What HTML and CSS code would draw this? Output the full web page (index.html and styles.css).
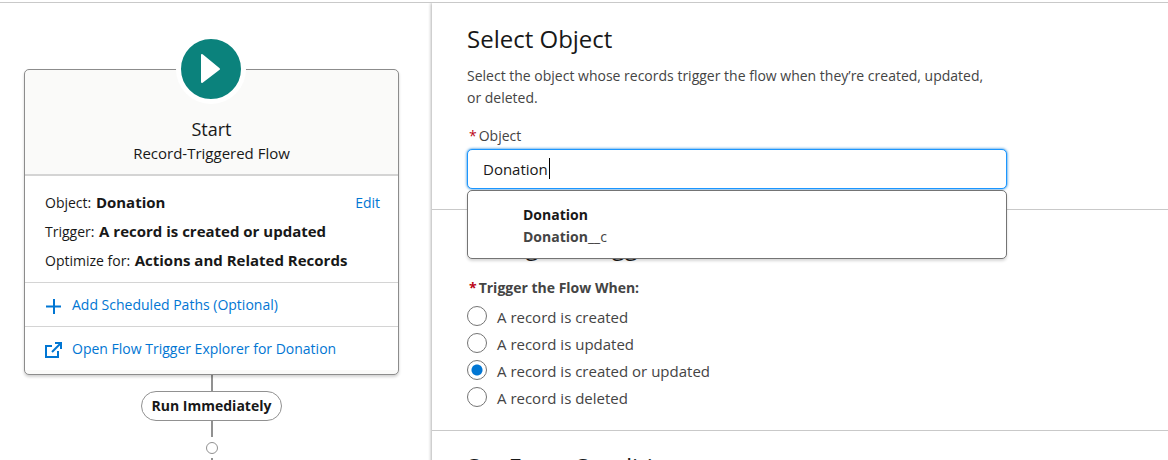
FILE: index.html
```html
<!DOCTYPE html>
<html lang="en">
<head>
    <meta charset="UTF-8">
    <meta name="viewport" content="width=device-width, initial-scale=1.0">
    <title>Flow Builder - Configure Start</title>
    <link rel="stylesheet" href="styles.css">
</head>
<body>
    <div class="builder">

        <main class="canvas">
            <div class="start-card">
                <div class="start-icon">
                    <svg width="60" height="60" viewBox="0 0 60 60" aria-hidden="true">
                        <path d="M21 16 L21 43 L38 30 Z" fill="#fff" stroke="#fff" stroke-width="2" stroke-linejoin="round"/>
                    </svg>
                </div>
                <div class="start-header">
                    <h2>Start</h2>
                    <p>Record-Triggered Flow</p>
                </div>
                <div class="start-details">
                    <a href="#" class="edit-link">Edit</a>
                    <p>Object: <strong>Donation</strong></p>
                    <p>Trigger: <strong>A record is created or updated</strong></p>
                    <p>Optimize for: <strong>Actions and Related Records</strong></p>
                </div>
                <a href="#" class="start-action">
                    <svg width="18" height="18" viewBox="0 0 18 18" aria-hidden="true">
                        <path d="M9 2 V17 M1 9.5 H16" fill="none" stroke="#0176d3" stroke-width="2"/>
                    </svg>
                    <span>Add Scheduled Paths (Optional)</span>
                </a>
                <a href="#" class="start-action">
                    <svg width="18" height="18" viewBox="0 0 18 18" aria-hidden="true">
                        <path d="M7 5 H1 V16 H13 V10" fill="none" stroke="#0176d3" stroke-width="2"/>
                        <path d="M7 11 L15 3" fill="none" stroke="#0176d3" stroke-width="2"/>
                        <path d="M10 2 H16 V8" fill="none" stroke="#0176d3" stroke-width="2"/>
                    </svg>
                    <span>Open Flow Trigger Explorer for Donation</span>
                </a>
            </div>
            <div class="connector"></div>
            <div class="path-label">Run Immediately</div>
            <div class="connector"></div>
            <button class="add-node" aria-label="Add element"></button>
            <div class="connector"></div>
        </main>

        <aside class="panel">
            <section class="panel-section">
                <h1>Select Object</h1>
                <p class="description">Select the object whose records trigger the flow when they’re created, updated, or deleted.</p>
                <label for="object" class="field-label"><span class="required">*</span>Object</label>
                <div class="combobox">
                    <input type="text" id="object" value="Donation" autocomplete="off">
                    <span class="caret"></span>
                    <ul class="dropdown">
                        <li>
                            <div class="option-name">Donation</div>
                            <div class="option-api"><b>Donation</b>__c</div>
                        </li>
                    </ul>
                </div>
            </section>

            <section class="panel-section">
                <h1>Configure Trigger</h1>
                <fieldset>
                    <legend><span class="required">*</span>Trigger the Flow When:</legend>
                    <label class="radio"><input type="radio" name="trigger"><span>A record is created</span></label>
                    <label class="radio"><input type="radio" name="trigger"><span>A record is updated</span></label>
                    <label class="radio"><input type="radio" name="trigger" checked><span>A record is created or updated</span></label>
                    <label class="radio"><input type="radio" name="trigger"><span>A record is deleted</span></label>
                </fieldset>
            </section>

            <section class="panel-section">
                <h1>Set Entry Conditions</h1>
            </section>
        </aside>

    </div>
</body>
</html>
```
FILE: styles.css
```css
* {
    box-sizing: border-box;
}
body {
    margin: 0;
    padding-top: 2px;
    height: 100vh;
    overflow: hidden;
    font-family: 'Open Sans', 'Noto Sans', sans-serif;
    font-size: 14px;
    line-height: 20px;
    color: #181818;
    background: #fff;
}
h1, h2, p, ul {
    margin: 0;
    padding: 0;
    font-weight: normal;
}
a {
    color: #0176d3;
    text-decoration: none;
}
.builder {
    display: grid;
    grid-template-columns: 432px 1fr;
    height: 100%;
    border-top: 1px solid #c9c9c9;
}

/* Canvas */
.canvas {
    display: flex;
    flex-direction: column;
    align-items: center;
    padding: 66px 33px 0 24px;
}
.start-card {
    position: relative;
    width: 100%;
    flex-shrink: 0;
    padding-bottom: 4px;
    border: 1px solid #8c8c8c;
    border-radius: 5px;
    background: #fafaf9;
    box-shadow: 0 2px 3px rgba(0, 0, 0, 0.18);
}
.start-icon {
    position: absolute;
    top: -36px;
    left: 50%;
    width: 70px;
    height: 70px;
    margin-left: -36px;
    border: 5px solid #fff;
    border-radius: 50%;
    background: #0b827c;
}
.start-icon svg {
    display: block;
}
.start-header {
    padding: 45px 20px 11px;
    border-bottom: 2px solid #d4d4d4;
    text-align: center;
}
.start-header h2 {
    font-size: 18px;
    line-height: 28px;
}
.start-header p {
    font-size: 15px;
}
.start-details {
    position: relative;
    padding: 12px 20px 7px;
    background: #fff;
}
.start-details p {
    line-height: 29px;
}
.start-details strong {
    margin-left: 1px;
    font-size: 15px;
}
.edit-link {
    float: right;
    line-height: 29px;
    margin-right: -2px;
}
.start-action {
    display: flex;
    align-items: center;
    gap: 9px;
    height: 44px;
    padding: 0 20px;
    border-top: 1px solid #d4d4d4;
    background: #fff;
}
.start-action svg {
    margin-top: 2px;
}
.connector {
    flex-shrink: 0;
    width: 2px;
    height: 16px;
    background: #919191;
}
.path-label {
    flex-shrink: 0;
    padding: 4px 10px;
    border: 1px solid #919191;
    border-radius: 15px;
    font-weight: bold;
}
.add-node {
    flex-shrink: 0;
    width: 12px;
    height: 12px;
    margin: 5px 0 4px;
    padding: 0;
    border: 1px solid #919191;
    border-radius: 50%;
    background: #fff;
}

/* Side panel */
.panel {
    box-shadow: -1px 0 3px rgba(0, 0, 0, 0.3);
    background: #fff;
    color: #444;
    overflow: hidden;
    clip-path: inset(0 0 0 -6px);
}
.panel-section {
    padding: 20px 35px;
    border-bottom: 1px solid #c9c9c9;
}
.panel-section h1 {
    font-size: 24px;
    line-height: 32px;
    color: #181818;
}
.description {
    max-width: 530px;
    margin: 10px 0 17px;
    line-height: 22px;
}
.field-label {
    display: block;
    margin-bottom: 3px;
    padding-left: 2px;
}
.required {
    margin-right: 2px;
    color: #ba0517;
}
.combobox {
    position: relative;
    max-width: 540px;
}
.combobox input {
    display: block;
    width: 100%;
    height: 40px;
    padding: 0 15px;
    border: 1px solid #1b96ff;
    border-radius: 5px;
    outline: none;
    box-shadow: 0 0 3px #0176d3;
    background: #fff;
    color: #181818;
    font: inherit;
    font-size: 15px;
}
.caret {
    position: absolute;
    top: 9px;
    left: 82px;
    width: 1px;
    height: 21px;
    background: #000;
}
.dropdown {
    position: absolute;
    top: 100%;
    left: 0;
    z-index: 1;
    width: 100%;
    margin-top: 1px;
    padding: 13px 55px 10px;
    border: 1px solid #747474;
    border-radius: 5px;
    background: #fff;
    box-shadow: 0 2px 3px rgba(0, 0, 0, 0.16);
    line-height: 22px;
    list-style: none;
}
.option-name {
    color: #181818;
    font-weight: bold;
}
fieldset {
    margin: 16px 0 0;
    padding: 0;
    border: none;
}
legend {
    margin-bottom: 4px;
    padding: 0 2px;
    font-weight: bold;
}
.radio {
    display: flex;
    align-items: center;
    gap: 10px;
    height: 27px;
    font-size: 15px;
}
.radio span {
    padding-top: 2px;
}
.radio input {
    appearance: none;
    width: 20px;
    height: 20px;
    margin: 0;
    border: 1px solid #747474;
    border-radius: 50%;
    background: #fff;
}
.radio input:checked {
    background: radial-gradient(circle, #0176d3 5px, #fff 6px);
}
```
